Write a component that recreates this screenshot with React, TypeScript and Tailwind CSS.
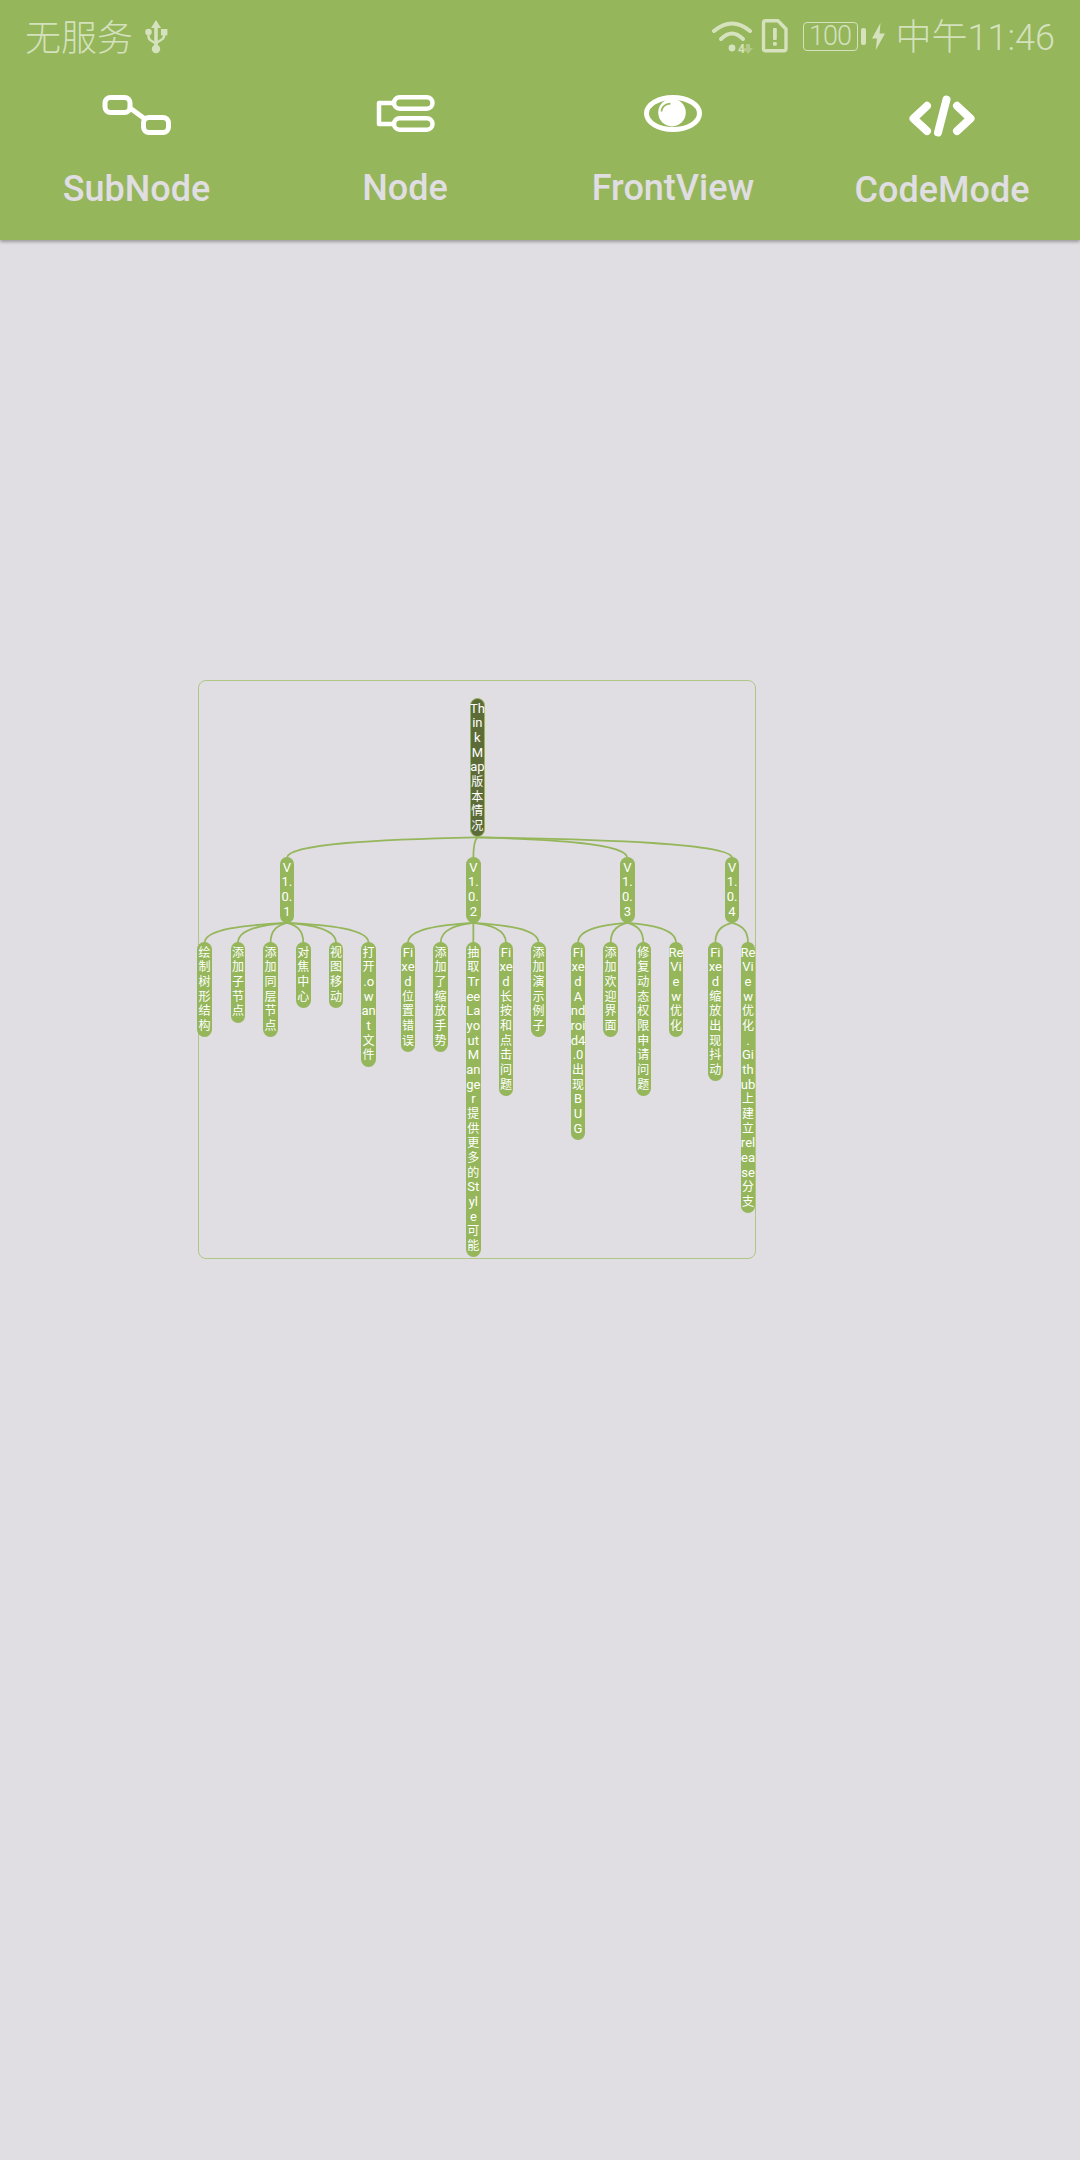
import React from "react";

type TreeNode = { text: string; x: number; children?: TreeNode[] };

const ROW = 14.667;
const W = 14.67;
const OX = 190;
const OY = 670;

const tree: TreeNode = {
  text: "Th in k M ap 版 本 情 况",
  x: 470,
  children: [
    {
      text: "V 1. 0. 1",
      x: 279.6,
      children: [
        { text: "绘 制 树 形 结 构", x: 197.3 },
        { text: "添 加 子 节 点", x: 230.6 },
        { text: "添 加 同 层 节 点", x: 263.2 },
        { text: "对 焦 中 心", x: 296 },
        { text: "视 图 移 动", x: 328.7 },
        { text: "打 开 .o w an t 文 件", x: 361.3 },
      ],
    },
    {
      text: "V 1. 0. 2",
      x: 466,
      children: [
        { text: "Fi xe d 位 置 错 误", x: 400.6 },
        { text: "添 加 了 缩 放 手 势", x: 433.3 },
        { text: "抽 取 Tr ee La yo ut M an ge r 提 供 更 多 的 St yl e 可 能", x: 466 },
        { text: "Fi xe d 长 按 和 点 击 问 题", x: 498.7 },
        { text: "添 加 演 示 例 子", x: 531.3 },
      ],
    },
    {
      text: "V 1. 0. 3",
      x: 620,
      children: [
        { text: "Fi xe d A nd roi d4 .0 出 现 B U G", x: 570.7 },
        { text: "添 加 欢 迎 界 面", x: 603.3 },
        { text: "修 复 动 态 权 限 申 请 问 题", x: 636 },
        { text: "Re Vi e w 优 化", x: 668.7 },
      ],
    },
    {
      text: "V 1. 0. 4",
      x: 724.7,
      children: [
        { text: "Fi xe d 缩 放 出 现 抖 动", x: 708 },
        { text: "Re Vi e w 优 化 . Gi th ub 上 建 立 rel ea se 分 支", x: 740.7 },
      ],
    },
  ],
};

const levelY = [698, 857, 942];

function heightOf(n: TreeNode) {
  return n.text.split(" ").length * ROW + 7.3;
}

function collect(
  n: TreeNode,
  level: number,
  nodes: { n: TreeNode; level: number }[],
  edges: string[]
) {
  nodes.push({ n, level });
  const px = n.x + W / 2 - OX;
  const py = levelY[level] + heightOf(n) - OY;
  (n.children || []).forEach((c) => {
    const cx = c.x + W / 2 - OX;
    const cy = levelY[level + 1] - OY + 1;
    const dx = cx - px;
    const h = cy - py;
    edges.push(
      `M${px} ${py}C${px + dx * 0.5} ${py + h * 0.1} ${cx} ${py + h * 0.3} ${cx} ${cy}`
    );
    collect(c, level + 1, nodes, edges);
  });
}

function Diagram() {
  const nodes: { n: TreeNode; level: number }[] = [];
  const edges: string[] = [];
  collect(tree, 0, nodes, edges);
  return (
    <div className="relative ml-[190px] mt-[430px] h-[600px] w-[580px]">
      <div className="absolute left-[7.5px] top-[9.5px] h-[579px] w-[558px] rounded-[8px] border-[1.5px] border-[#b0c686]" />
      <svg className="absolute left-0 top-0" width="580" height="600" fill="none">
        {edges.map((d, i) => (
          <path key={i} d={d} stroke="#95b65b" strokeWidth="1.8" />
        ))}
      </svg>
      {nodes.map(({ n, level }, i) => (
        <div
          key={i}
          className={
            level === 0
              ? "absolute flex flex-col items-center rounded-full border border-[#95b65b] bg-[#5d6b39] py-[2.65px] text-white whitespace-nowrap"
              : "absolute flex flex-col items-center rounded-full bg-[#95b65b] py-[3.65px] text-white whitespace-nowrap"
          }
          style={{
            left: n.x - OX,
            top: levelY[level] - OY,
            width: W,
            height: heightOf(n),
            fontFamily: '"Roboto", "Noto Sans CJK SC", sans-serif',
            lineHeight: `${ROW}px`,
          }}
        >
          {n.text.split(" ").map((r, j) => (
            <div key={j} className={/^[\x00-\x7f]+$/.test(r) ? "text-[13px] font-normal" : "text-[12px] font-normal"}>
              {r}
            </div>
          ))}
        </div>
      ))}
    </div>
  );
}

function StatusBar() {
  return (
    <div className="flex h-[72px] items-center justify-between pl-[25px] pr-[25px] font-['Roboto','Noto_Sans_CJK_SC',sans-serif] text-[36px] font-light text-white/60">
      <div className="flex items-center">
        <span className="mt-[5px]">无服务</span>
        <svg className="ml-[11px] mt-[1px]" width="24" height="36" viewBox="0 0 24 36" fill="#d5e2bd">
          <path d="M12 1l5 8h-3.2v17h-3.6V9H7z" />
          <circle cx="12" cy="30" r="4.2" />
          <circle cx="4.5" cy="13" r="3.3" />
          <rect x="17" y="10" width="6.4" height="6.4" />
          <path d="M4.5 14v3.5c0 3 2 4 4 5l3.5 2M20.2 14v2.5c0 3-2 4-4 5l-4 2.5" fill="none" stroke="#d5e2bd" strokeWidth="2.4" />
        </svg>
      </div>
      <div className="flex items-center">
        <svg width="42" height="36" viewBox="0 0 42 36" fill="none" className="mt-[1px]">
          <path d="M2 12Q20 -3 38 12" stroke="#d5e2bd" strokeWidth="4" strokeLinecap="round" />
          <path d="M9 20Q20 9 31 20" stroke="#d5e2bd" strokeWidth="4" strokeLinecap="round" />
          <circle cx="20" cy="29" r="3.4" fill="#d5e2bd" />
          <text x="26" y="34" fontSize="12" fontWeight="700" fill="#d5e2bd" fontFamily="Roboto">4</text>
          <path d="M34 25h4v4h3l-5 6-5-6h3z" fill="#d5e2bd" opacity="0.45" />
        </svg>
        <svg className="ml-[7px]" width="27" height="34" viewBox="0 0 27 34" fill="none">
          <path d="M2.500 3.500a1.800 1.800 0 0 1 1.800-1.800H17L25 10v20a1.800 1.800 0 0 1-1.800 1.800H4.300a1.800 1.800 0 0 1-1.800-1.800z" stroke="#d5e2bd" strokeWidth="3.4" strokeLinejoin="round" />
          <rect x="12" y="9" width="3.800" height="12" rx="1" fill="#d5e2bd" />
          <rect x="12" y="23" width="3.800" height="3.800" rx="1" fill="#d5e2bd" />
        </svg>
        <div className="ml-[15px] flex h-[29px] w-[55px] items-center justify-center rounded-[4px] border-[1.5px] border-[#d5e2bd] text-[27px] leading-none tracking-[-1px]">
          100
        </div>
        <div className="ml-[3px] h-[17px] w-[5px] rounded-[2px] bg-[#d5e2bd]" />
        <svg className="ml-[6px]" width="13" height="27" viewBox="0 0 13 27" fill="#d5e2bd">
          <path d="M8.500 0L0 15.500h5L3.800 27 13 10.500H7.600z" />
        </svg>
        <span className="ml-[11px] mt-[4px] leading-none">中午11:46</span>
      </div>
    </div>
  );
}

const iconClass = "block h-[46px]";

function SubNodeIcon() {
  return (
    <svg className={iconClass} width="72" height="46" viewBox="0 0 72 46" fill="none" stroke="#fff" strokeWidth="5">
      <rect x="4" y="4.500" width="25" height="15" rx="5.500" />
      <rect x="42.500" y="24.500" width="25" height="15" rx="5.500" />
      <path d="M29 15l15 11" />
    </svg>
  );
}

function NodeIcon() {
  return (
    <svg className={iconClass} width="60" height="46" viewBox="0 0 60 46" fill="none" stroke="#fff" strokeWidth="4.500">
      <rect x="19" y="4.200" width="38.500" height="11.500" rx="5.750" />
      <rect x="19" y="25.200" width="38.500" height="11.500" rx="5.750" />
      <path d="M19.500 10H4v21h15.500" strokeLinejoin="round" />
    </svg>
  );
}

function EyeIcon() {
  return (
    <svg className={iconClass} width="60" height="46" viewBox="0 0 60 46" fill="none">
      <ellipse cx="30" cy="20.500" rx="26.500" ry="16" stroke="#fff" strokeWidth="5" />
      <circle cx="29" cy="19.600" r="13.800" fill="#fff" />
      <path d="M18.500 18.500c.5-4.500 4-7.500 9-7.800" stroke="#95b65b" strokeWidth="1.800" />
    </svg>
  );
}

function CodeIcon() {
  return (
    <svg className={iconClass} width="68" height="46" viewBox="0 0 68 46" fill="none" stroke="#fff" strokeWidth="8" strokeLinecap="round" strokeLinejoin="round">
      <path d="M19 12.800L5.500 25.500 19 38" />
      <path d="M49 12.800L62.500 25.500 49 38" />
      <path d="M38.500 6.500L30 39.500" />
    </svg>
  );
}

function Tab({ icon, label, className, labelClass }: { icon: React.ReactNode; label: string; className: string; labelClass: string }) {
  return (
    <div className={"flex flex-col items-center " + className}>
      {icon}
      <div className={"font-['Roboto',sans-serif] text-[36px] font-medium leading-[40px] text-[#e0dee2] " + labelClass}>
        {label}
      </div>
    </div>
  );
}

export default function App() {
  return (
    <div className="h-[2160px] w-[1080px] overflow-hidden bg-[#e0dee2]">
      <header className="relative h-[240px] bg-[#95b65b] shadow-[0_2px_3px_rgba(0,0,0,0.3)]">
        <StatusBar />
        <div className="grid grid-cols-4 pt-[21px]">
          <Tab icon={<SubNodeIcon />} label="SubNode" className="pl-[3px]" labelClass="mt-[30px]" />
          <Tab icon={<NodeIcon />} label="Node" className="pl-[0px]" labelClass="mt-[29px]" />
          <Tab icon={<EyeIcon />} label="FrontView" className="pr-[4px]" labelClass="mt-[29px]" />
          <Tab icon={<CodeIcon />} label="CodeMode" className="pr-[6px]" labelClass="mt-[31px]" />
        </div>
      </header>
      <Diagram />
    </div>
  );
}
